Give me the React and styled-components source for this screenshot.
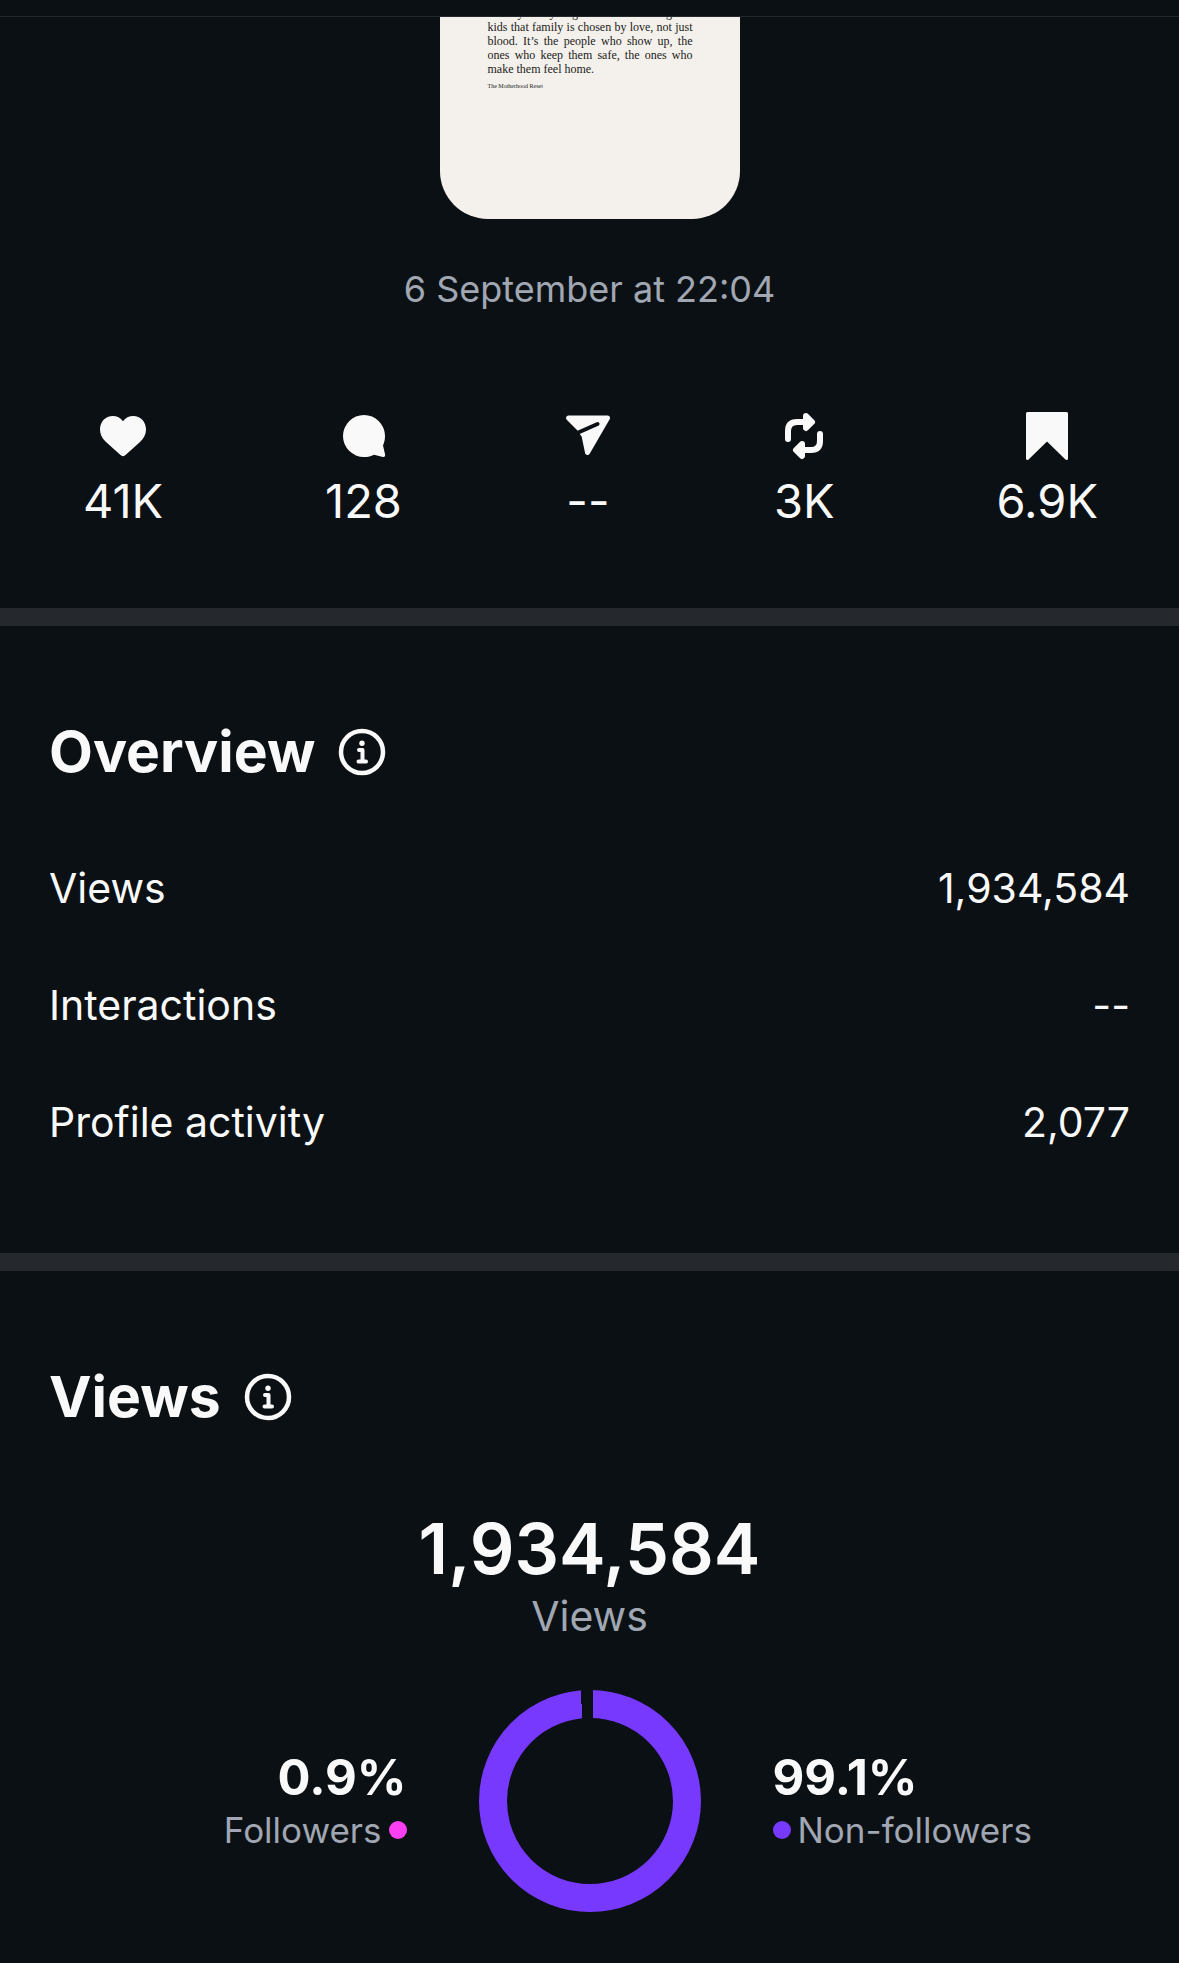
import React from 'react';
import styled, { createGlobalStyle } from 'styled-components';

const GlobalStyle = createGlobalStyle`
  * {
    box-sizing: border-box;
  }

  body {
    margin: 0;
    background-color: #0b1014;
    color: #f9f9f9;
    font-family: Inter, 'Liberation Sans', sans-serif;
  }
`;

const Page = styled.main`
  width: 100%;
`;

const TopBar = styled.header`
  height: 17px;
  border-bottom: 1px solid #25282d;
`;

const PostSection = styled.section`
  display: flex;
  flex-direction: column;
  align-items: center;
  padding-bottom: 79px;
`;

const PostPreview = styled.article`
  width: 300px;
  height: 202px;
  display: flex;
  flex-direction: column;
  justify-content: flex-end;
  overflow: hidden;
  padding: 0 47px 129px 48px;
  border-radius: 0 0 48px 48px;
  background-color: #f4f1ec;
  color: #1b1a19;
  font-family: 'Liberation Serif', serif;
`;

const Quote = styled.p`
  margin: 0;
  font-size: 12px;
  line-height: 14px;
  text-align: justify;
`;

const Signature = styled.small`
  margin-top: 6px;
  font-size: 6px;
  line-height: 8px;
`;

const PostDate = styled.time`
  margin-top: 48px;
  color: #a0a7b3;
  font-size: 36px;
  line-height: 44px;
`;

const Stats = styled.ul`
  width: 100%;
  display: flex;
  justify-content: space-around;
  margin: 101px 0 0;
  padding: 0 0 0 2px;
  list-style: none;
`;

const Stat = styled.li`
  display: flex;
  flex-direction: column;
  align-items: center;
  gap: 11px;
  font-size: 47px;
  line-height: 56px;
`;

const StatIcon = styled.svg`
  width: 48px;
  height: 50px;
  fill: #f9f9f9;
  stroke: #f9f9f9;
  stroke-linejoin: round;
  stroke-linecap: round;
`;

const Divider = styled.hr`
  height: 18px;
  margin: 0;
  border: none;
  background-color: #25282d;
`;

const Section = styled.section`
  padding: 91px 49px 0;
`;

const Heading = styled.div`
  display: flex;
  align-items: center;
  gap: 23px;
`;

const Title = styled.h2`
  margin: 0;
  font-size: 57px;
  font-weight: 700;
  line-height: 70px;
`;

const InfoButton = styled.button`
  display: flex;
  padding: 0;
  border: none;
  background: none;
  color: #f9f9f9;
  cursor: pointer;
`;

const Metrics = styled.dl`
  margin: 0;
  padding: 42px 0 73px;
`;

const Metric = styled.div`
  display: flex;
  align-items: center;
  justify-content: space-between;
  height: 117px;
  font-size: 41px;
`;

const MetricValue = styled.dd`
  margin: 0;
`;

const Total = styled.div`
  display: flex;
  flex-direction: column;
  align-items: center;
  margin-top: 75px;
`;

const TotalNumber = styled.strong`
  font-size: 70px;
  font-weight: 600;
  line-height: 84px;
`;

const TotalLabel = styled.span`
  color: #a0a7b3;
  font-size: 41px;
  line-height: 50px;
`;

const Breakdown = styled.div`
  display: grid;
  grid-template-columns: 1fr auto 1fr;
  align-items: center;
  gap: 72px;
  margin-top: 49px;
  padding-bottom: 51px;
`;

const Share = styled.div`
  display: flex;
  flex-direction: column;
  align-items: ${({ $side }) => ($side === 'left' ? 'flex-end' : 'flex-start')};
`;

const SharePercent = styled.strong`
  font-size: 49px;
  font-weight: 700;
  line-height: 58px;
`;

const ShareLabel = styled.span`
  display: flex;
  flex-direction: ${({ $side }) => ($side === 'left' ? 'row-reverse' : 'row')};
  align-items: center;
  gap: 7px;
  color: #a0a7b3;
  font-size: 35px;
  line-height: 46px;
`;

const Dot = styled.i`
  width: 18px;
  height: 18px;
  border-radius: 50%;
  background-color: ${({ $color }) => $color};
`;

const HeartIcon = () => (
  <StatIcon viewBox="0 0 48 50" aria-label="Likes">
    <path
      strokeWidth="0"
      d="M24 9.200C26.500 5.800 30 4 34.200 4C41.500 4 47 9.800 47 17.500C47 22.500 44.800 26.300 41 30L26.800 42.800Q24 45.500 21.200 42.800L7 30C3.200 26.300 1 22.500 1 17.500C1 9.800 6.500 4 13.800 4C18 4 21.500 5.800 24 9.200Z"
    />
  </StatIcon>
);

const CommentIcon = () => (
  <StatIcon viewBox="0 0 48 50" aria-label="Comments">
    <path
      strokeWidth="0"
      d="M24 3A21 21 0 1 0 24 45C28 45 31 44.200 34 42.700L43 45Q45.600 45.200 45.100 42.600L43 33.500C44.300 30.500 45 27.500 45 24A21 21 0 0 0 24 3Z"
    />
  </StatIcon>
);

const ShareIcon = () => (
  <StatIcon viewBox="0 0 48 50" aria-label="Shares">
    <path strokeWidth="5" d="M4.500 6H43.500L23.500 40.500L20 23.500L15 16.500Z" />
    <path stroke="#0b1014" strokeWidth="4" d="M12 21.500L33.500 12" />
  </StatIcon>
);

const RepostIcon = () => (
  <StatIcon viewBox="0 0 48 50" aria-label="Reposts">
    <g fill="none" strokeWidth="6">
      <path d="M8 27V19Q8 10 17 10H30" />
      <path d="M40 22V29Q40 38 31 38H18" />
    </g>
    <path strokeWidth="6" d="M26 4L32 10L26 16Z" />
    <path strokeWidth="6" d="M22 32L16 38L22 44Z" />
  </StatIcon>
);

const SaveIcon = () => (
  <StatIcon viewBox="0 0 48 50" aria-label="Saves">
    <path strokeWidth="3" d="M4.500 1.500H43.500V46.500L24 27.500L4.500 46.500Z" />
  </StatIcon>
);

const InfoIcon = () => (
  <svg width="48" height="48" viewBox="0 0 48 48" fill="none" stroke="currentColor">
    <circle cx="24" cy="24" r="21" strokeWidth="4.500" />
    <circle cx="24" cy="15.300" r="2.700" fill="currentColor" stroke="none" />
    <path d="M21 22H24.500V33.500M20.500 33.500H28" strokeWidth="4" strokeLinecap="round" strokeLinejoin="round" />
  </svg>
);

const ViewsChart = () => (
  <svg width="222" height="222" viewBox="0 0 222 222" role="img" aria-label="Views by audience">
    <circle cx="111" cy="111" r="97" fill="none" stroke="#7839ff" strokeWidth="28" />
    <path d="M102 0H114V29H103V14H102Z" fill="#0b1014" />
  </svg>
);

const stats = [
  { icon: HeartIcon, value: '41K' },
  { icon: CommentIcon, value: '128' },
  { icon: ShareIcon, value: '--' },
  { icon: RepostIcon, value: '3K' },
  { icon: SaveIcon, value: '6.9K' },
];

const metrics = [
  { label: 'Views', value: '1,934,584' },
  { label: 'Interactions', value: '--' },
  { label: 'Profile activity', value: '2,077' },
];

const SectionHeading = ({ title }) => (
  <Heading>
    <Title>{title}</Title>
    <InfoButton type="button" aria-label={`About ${title}`}>
      <InfoIcon />
    </InfoButton>
  </Heading>
);

const AudienceShare = ({ side, percent, label, color }) => (
  <Share $side={side}>
    <SharePercent>{percent}</SharePercent>
    <ShareLabel $side={side}>
      <Dot $color={color} />
      {label}
    </ShareLabel>
  </Share>
);

const App = () => (
  <>
    <GlobalStyle />
    <Page>
      <TopBar />
      <PostSection>
        <PostPreview>
          <Quote>
            Society really ought to start teaching our kids that family is chosen by love, not just
            blood. It’s the people who show up, the ones who keep them safe, the ones who make them
            feel home.
          </Quote>
          <Signature>The Motherhood Reset</Signature>
        </PostPreview>
        <PostDate>6 September at 22:04</PostDate>
        <Stats>
          {stats.map(({ icon: Icon, value }, index) => (
            <Stat key={index}>
              <Icon />
              {value}
            </Stat>
          ))}
        </Stats>
      </PostSection>
      <Divider />
      <Section>
        <SectionHeading title="Overview" />
        <Metrics>
          {metrics.map(({ label, value }) => (
            <Metric key={label}>
              <dt>{label}</dt>
              <MetricValue>{value}</MetricValue>
            </Metric>
          ))}
        </Metrics>
      </Section>
      <Divider />
      <Section>
        <SectionHeading title="Views" />
        <Total>
          <TotalNumber>1,934,584</TotalNumber>
          <TotalLabel>Views</TotalLabel>
        </Total>
        <Breakdown>
          <AudienceShare side="left" percent="0.9%" label="Followers" color="#fc3ff3" />
          <ViewsChart />
          <AudienceShare side="right" percent="99.1%" label="Non-followers" color="#7839ff" />
        </Breakdown>
      </Section>
    </Page>
  </>
);

export default App;
